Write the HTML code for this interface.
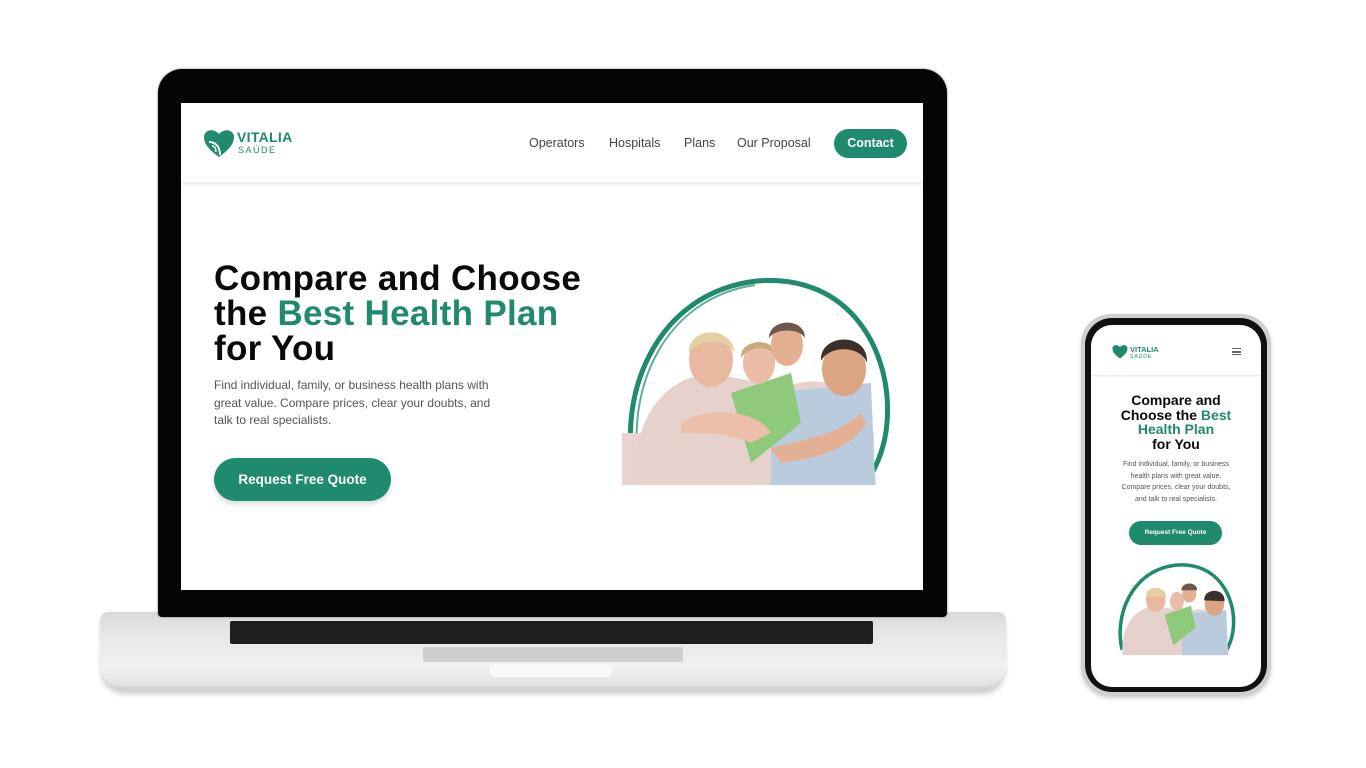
<!DOCTYPE html>
<html><head><meta charset="utf-8"><style>
*{margin:0;padding:0;box-sizing:border-box}
body{width:1366px;height:768px;background:#fff;position:relative;overflow:hidden;font-family:"Liberation Sans",sans-serif}
.a{position:absolute}
.g{color:#1f8a6e}
.h1{font-weight:bold;font-size:35px;line-height:35px;color:#0a0a0a;white-space:nowrap;letter-spacing:0.3px}
.nav{font-size:12.5px;color:#444;top:136px}
.btn{background:#1f8a6e;color:#fff;font-weight:bold;border-radius:22px;text-align:center}
</style></head><body>
<!-- laptop base -->
<div class="a" style="left:100px;top:612px;width:906px;height:80px;border-radius:8px 8px 24px 24px;background:linear-gradient(#d9d9d9,#e8e8e8 30%,#f0f0f0 70%,#d0d0d0);box-shadow:0 3px 4px rgba(0,0,0,.15)"></div>
<div class="a" style="left:100px;top:664px;width:906px;height:22px;border-radius:0 0 22px 22px;background:linear-gradient(#f4f4f4,#e2e2e2)"></div>
<div class="a" style="left:230px;top:621px;width:643px;height:23px;background:#1e1e1e;border-radius:2px"></div>
<div class="a" style="left:423px;top:647px;width:260px;height:15px;background:#cfcfcf;border-radius:2px"></div>
<div class="a" style="left:490px;top:665px;width:122px;height:12px;background:#fafafa;border-radius:0 0 5px 5px"></div>
<!-- laptop lid -->
<div class="a" style="left:158px;top:69px;width:789px;height:548px;background:#050505;border-radius:24px 24px 4px 4px;box-shadow:0 0 2px #777"></div>
<div class="a" style="left:181px;top:103px;width:742px;height:487px;background:#fff;overflow:hidden">
 <div class="a" style="left:0;top:0;width:742px;height:79px;box-shadow:0 2px 4px rgba(0,0,0,.1)"></div>
 <svg class="a" style="left:22px;top:25px" width="32" height="30" viewBox="0 0 32 30"><path d="M16 29C8 23 1 17 1 9C1 3 9 -1 16 6C23 -1 31 3 31 9C31 17 24 23 16 29Z" fill="#1f8a6e"/><path d="M6 14C12 14 17 18 17 27" stroke="#fff" stroke-width="2" fill="none"/><path d="M9 18C12 18 13 21 13 24" stroke="#fff" stroke-width="1.5" fill="none"/></svg>
 <div class="a g" style="left:56px;top:26px;font-weight:bold;font-size:14px;letter-spacing:.3px">VITALIA</div>
 <div class="a g" style="left:57px;top:42px;font-size:9px;letter-spacing:1.5px">SAÚDE</div>
 <div class="a nav" style="left:348px;top:33px">Operators</div>
 <div class="a nav" style="left:428px;top:33px">Hospitals</div>
 <div class="a nav" style="left:503px;top:33px">Plans</div>
 <div class="a nav" style="left:556px;top:33px">Our Proposal</div>
 <div class="a btn" style="left:653px;top:26px;width:73px;height:29px;line-height:29px;font-size:12.5px;border-radius:15px">Contact</div>
 <div class="a h1" style="left:33px;top:158px">Compare and Choose<br>the <span class="g">Best Health Plan</span><br>for You</div>
 <div class="a" style="left:33px;top:274px;font-size:12px;line-height:17.5px;color:#555;white-space:nowrap">Find individual, family, or business health plans with<br>great value. Compare prices, clear your doubts, and<br>talk to real specialists.</div>
 <div class="a btn" style="left:33px;top:355px;width:177px;height:43px;line-height:43px;font-size:13.5px;box-shadow:0 3px 6px rgba(0,0,0,.15)">Request Free Quote</div>
 <svg class="a" style="left:440px;top:170px" width="272" height="215" viewBox="0 0 272 215">
  <path d="M14 200C-4 130 30 20 136 8C230 0 272 80 266 150C264 175 255 195 245 210" stroke="#1f8a6e" stroke-width="5" fill="none"/>
  <path d="M18 190C6 120 40 26 134 12" stroke="#1f8a6e" stroke-width="2" fill="none" opacity=".7"/>
  <rect x="1" y="160" width="252" height="52" fill="#e9d2cf"/>
  <path d="M15 212C10 150 40 105 90 100L140 110L170 112C210 100 250 115 255 212Z" fill="#e7d1cc"/>
  <path d="M150 120L250 110L254 212L150 212Z" fill="#b9cbdc"/>
  <path d="M110 120L170 100L180 150L130 190Z" fill="#8ec97c"/>
  <ellipse cx="90" cy="87" rx="22" ry="27" fill="#e8b9a0"/><path d="M68 80C66 55 110 50 114 80C105 65 78 65 68 80Z" fill="#e6cfa0"/>
  <ellipse cx="138" cy="90" rx="16" ry="21" fill="#ebbda6"/><path d="M120 85C118 66 155 62 157 85C150 72 128 72 120 85Z" fill="#c9a97e"/>
  <ellipse cx="166" cy="72" rx="16" ry="21" fill="#e4b092"/><path d="M148 65C148 45 184 44 184 65C178 55 155 55 148 65Z" fill="#6b5a4c"/>
  <ellipse cx="223" cy="96" rx="22" ry="27" fill="#dba483"/><path d="M200 88C198 60 248 58 246 90C240 72 208 72 200 88Z" fill="#3a2f2a"/>
  <path d="M60 150C90 130 140 140 150 160L130 170C110 160 80 160 60 160Z" fill="#ecc0a8"/>
  <path d="M150 175C190 165 220 160 240 140L245 150C230 175 200 185 160 190Z" fill="#e3b093"/>
 </svg>
</div>
<!-- phone -->
<div class="a" style="left:1081px;top:314px;width:190px;height:382px;border-radius:30px;background:#cfcfcf;box-shadow:0 2px 4px rgba(0,0,0,.2)"></div>
<div class="a" style="left:1085px;top:318px;width:182px;height:374px;border-radius:27px;background:#111"></div>
<div class="a" style="left:1091px;top:325px;width:170px;height:362px;border-radius:21px;background:#fff;overflow:hidden">
 <div class="a" style="left:0;top:0;width:170px;height:50px;box-shadow:0 1px 3px rgba(0,0,0,.12)"></div>
 <svg class="a" style="left:21px;top:19px" width="16" height="15" viewBox="0 0 32 30"><path d="M16 29C8 23 1 17 1 9C1 3 9 -1 16 6C23 -1 31 3 31 9C31 17 24 23 16 29Z" fill="#1f8a6e"/></svg>
 <div class="a g" style="left:39px;top:20px;font-weight:bold;font-size:7.5px">VITALIA</div>
 <div class="a g" style="left:39px;top:29px;font-size:5px;letter-spacing:1px">SAÚDE</div>
 <div class="a" style="left:141px;top:23px;width:9px;height:7px;border-top:1.5px solid #666;border-bottom:1.5px solid #666"></div>
 <div class="a" style="left:141px;top:26px;width:9px;height:1.5px;background:#666"></div>
 <div class="a" style="left:0;top:68px;width:170px;text-align:center;font-weight:bold;font-size:14px;line-height:14.7px;color:#0a0a0a">Compare and<br>Choose the <span class="g">Best</span><br><span class="g">Health Plan</span><br>for You</div>
 <div class="a" style="left:0;top:134px;width:170px;text-align:center;font-size:7px;line-height:11.5px;color:#555;white-space:nowrap">Find individual, family, or business<br>health plans with great value.<br>Compare prices, clear your doubts,<br>and talk to real specialists.</div>
 <div class="a btn" style="left:38px;top:196px;width:93px;height:24px;line-height:24px;font-size:6.5px;border-radius:12px">Request Free Quote</div>
 <svg class="a" style="left:25px;top:236px" width="120" height="96" viewBox="0 0 272 215">
  <path d="M14 200C-4 130 30 20 136 8C230 0 272 80 266 150C264 175 255 195 245 210" stroke="#1f8a6e" stroke-width="8" fill="none"/>
  <path d="M15 212C10 150 40 105 90 100L140 110L170 112C210 100 250 115 255 212Z" fill="#e7d1cc"/>
  <path d="M150 120L250 110L254 212L150 212Z" fill="#b9cbdc"/>
  <path d="M110 120L170 100L180 150L130 190Z" fill="#8ec97c"/>
  <ellipse cx="90" cy="87" rx="22" ry="27" fill="#e8b9a0"/><path d="M68 80C66 55 110 50 114 80Z" fill="#e6cfa0"/>
  <ellipse cx="138" cy="90" rx="16" ry="21" fill="#ebbda6"/>
  <ellipse cx="166" cy="72" rx="16" ry="21" fill="#e4b092"/><path d="M148 65C148 45 184 44 184 65Z" fill="#6b5a4c"/>
  <ellipse cx="223" cy="96" rx="22" ry="27" fill="#dba483"/><path d="M200 88C198 60 248 58 246 90Z" fill="#3a2f2a"/>
 </svg>
</div>
</body></html>
